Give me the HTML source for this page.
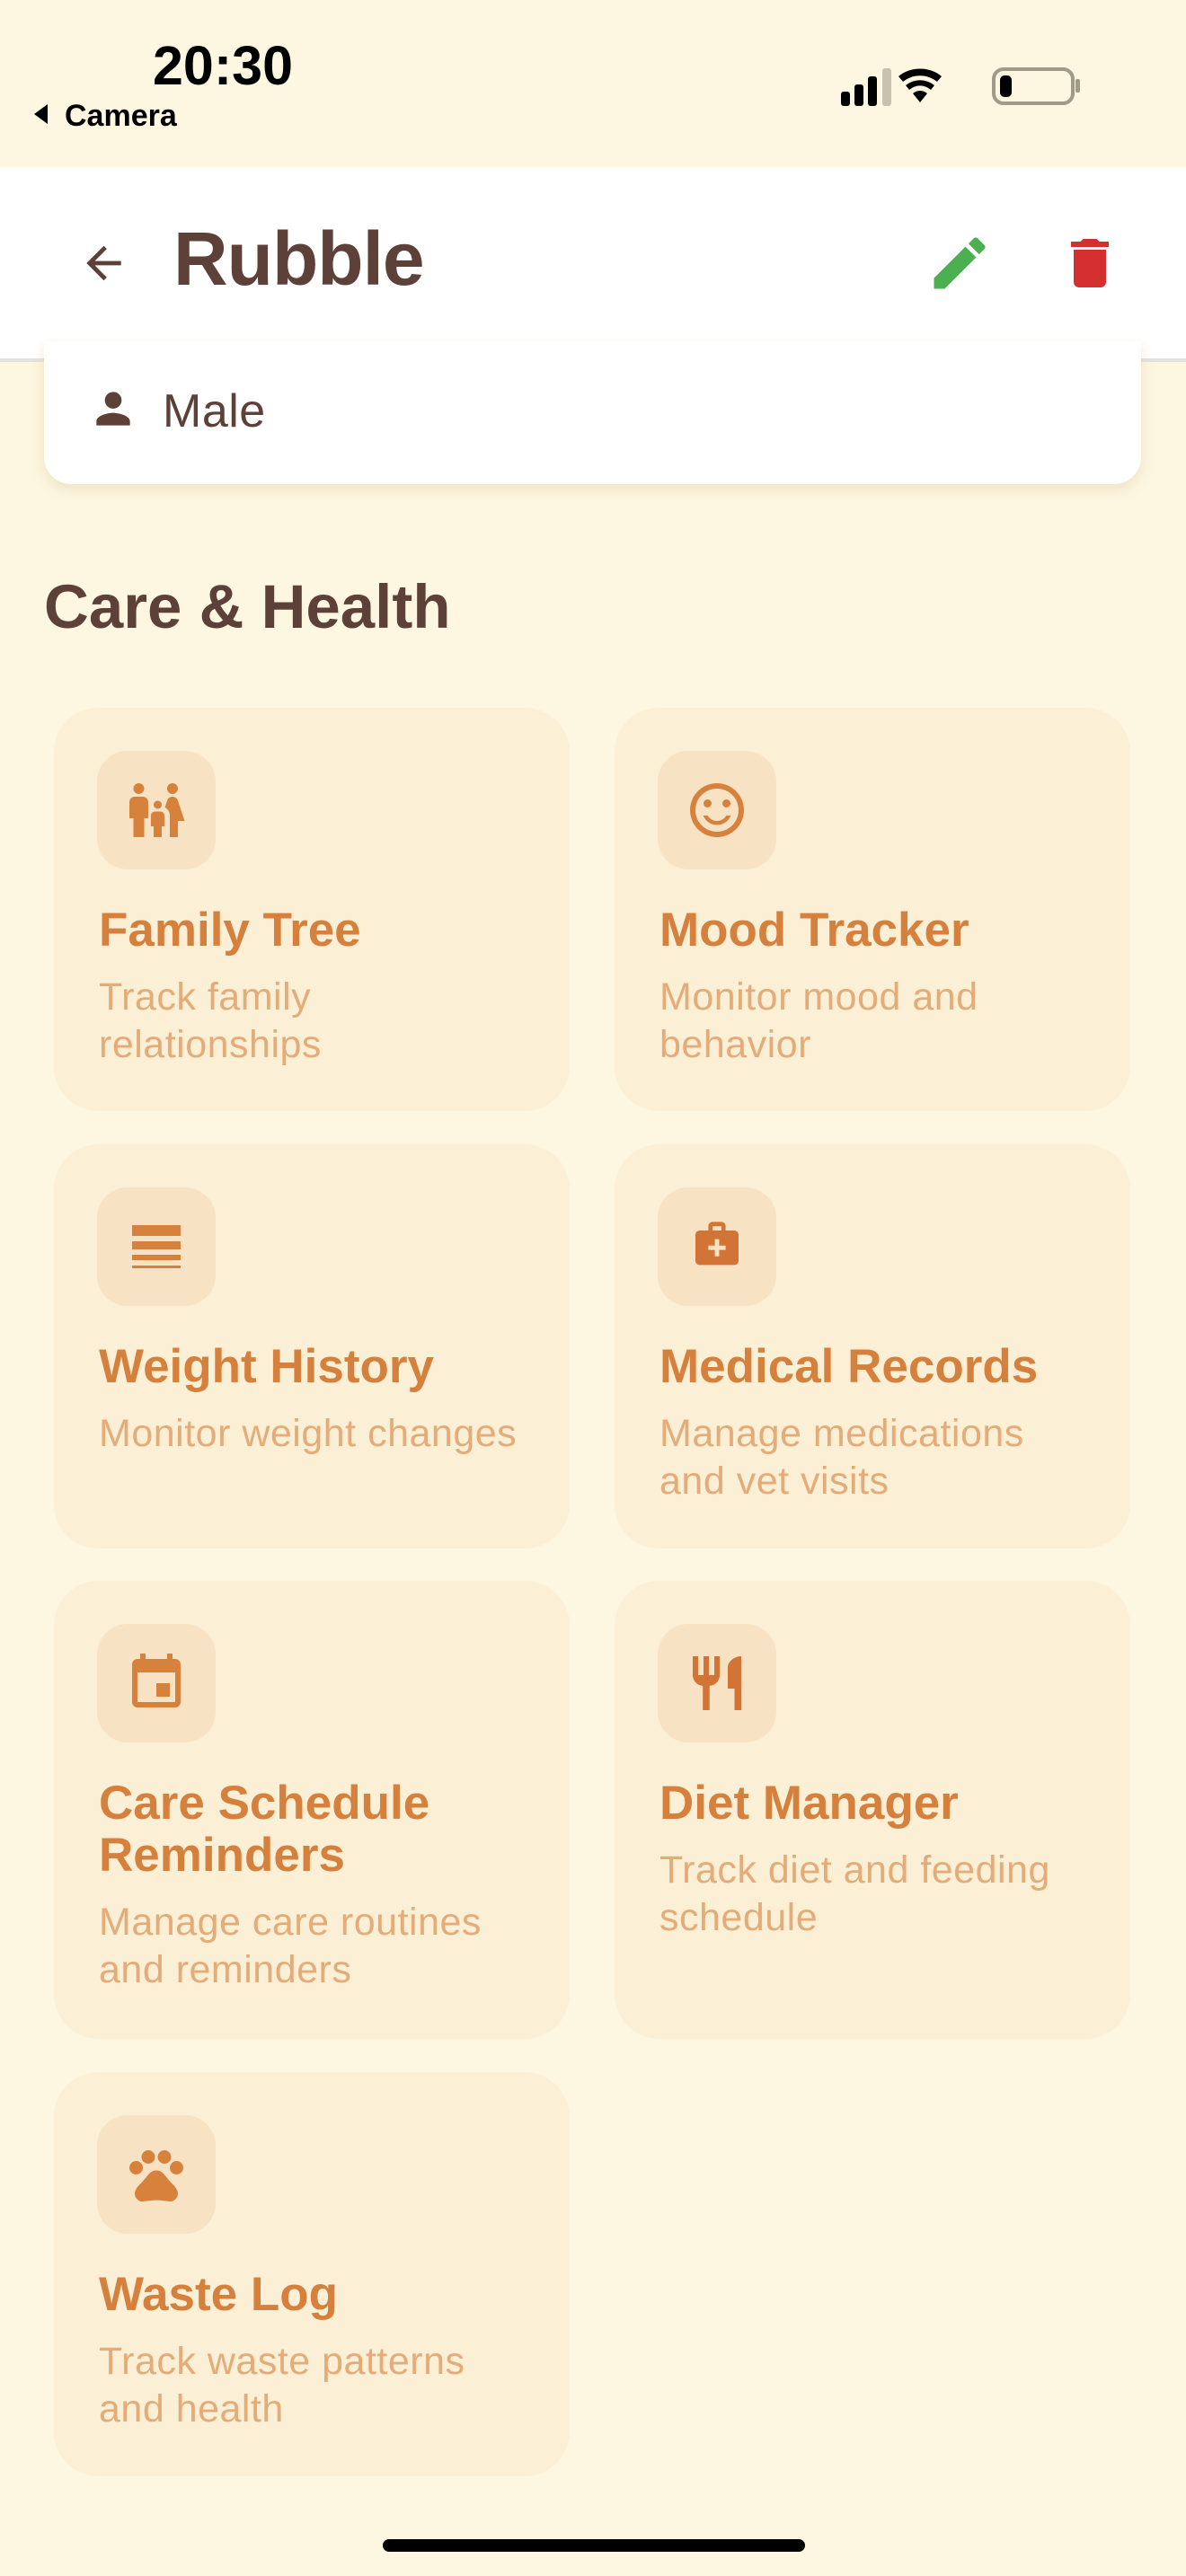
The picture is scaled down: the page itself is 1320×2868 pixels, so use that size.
<!DOCTYPE html>
<html><head><meta charset="utf-8"><style>
*{margin:0;padding:0;box-sizing:border-box}
body{width:1320px;height:2868px;background:#fdf6e0;font-family:"Liberation Sans",sans-serif;position:relative;overflow:hidden}
.abs{position:absolute}
.hdr{left:0;top:186px;width:1320px;height:217px;background:#fff;border-bottom:4px solid #e4e2dd}
.male{left:49px;top:380px;width:1221px;height:159px;background:#fff;border-radius:0 0 30px 30px;box-shadow:0 6px 14px rgba(200,170,120,.25)}
.card{position:absolute;width:574px;background:#fbefd6;border-radius:50px}
.ib{position:absolute;left:48px;top:48px;width:132px;height:132px;background:#f8e2c4;border-radius:34px;display:flex;align-items:center;justify-content:center}
.ib svg{width:72px;height:72px;fill:#d6823d}
.t{position:absolute;left:50px;top:219px;right:20px;color:#d5803c;font-weight:bold;font-size:53px;line-height:58px}
.d{position:absolute;left:50px;width:486px;color:#e4ac78;font-size:43px;line-height:53px;letter-spacing:.5px}
</style></head><body>
<div class="abs" style="left:170px;top:38px;font-size:61px;font-weight:bold;color:#000">20:30</div>
<div class="abs" style="left:38px;top:116px;width:0;height:0;border-top:11px solid transparent;border-bottom:11px solid transparent;border-right:15px solid #000"></div>
<div class="abs" style="left:72px;top:110px;font-size:34px;font-weight:bold;color:#000">Camera</div>
<svg class="abs" style="left:934px;top:74px" width="270" height="46">
<rect x="2" y="28" width="10" height="16" rx="3"/><rect x="17" y="20" width="10" height="24" rx="3"/><rect x="32" y="11" width="10" height="33" rx="3"/><rect x="48" y="2" width="10" height="42" rx="3" fill="#c9c2b0"/>
<path d="M90 40 L82 30 A12 12 0 0 1 98 30 Z"/><path d="M78 26 A18 18 0 0 1 102 26 L106 21 A25 25 0 0 0 74 21 Z"/><path d="M71 17 A30 30 0 0 1 109 17 L114 11 A38 38 0 0 0 66 11 Z"/>
<rect x="172" y="3" width="88" height="38" rx="11" fill="none" stroke="#a09a8a" stroke-width="4"/><rect x="179" y="10" width="13" height="24" rx="5"/><rect x="263" y="14" width="5" height="15" rx="2" fill="#a09a8a"/>
</svg>
<div class="abs hdr"></div>
<svg class="abs" style="left:72px;top:257px" width="72" height="72" viewBox="0 0 24 24" fill="#5d4037"><path d="M20 11H7.83l5.59-5.59L12 4l-8 8 8 8 1.41-1.41L7.83 13H20v-2z" transform="translate(2.5 0) scale(.8) translate(3 3)"/></svg>
<div class="abs" style="left:193px;top:240px;font-size:84px;font-weight:bold;color:#5d4037;letter-spacing:-1px">Rubble</div>
<svg class="abs" style="left:1030px;top:255px" width="76" height="76" viewBox="0 0 24 24" fill="#4caf50"><path d="M3 17.25V21h3.75L17.81 9.94l-3.75-3.75L3 17.25zM20.71 7.04c.39-.39.39-1.02 0-1.41l-2.34-2.34c-.39-.39-1.02-.39-1.41 0l-1.83 1.83 3.75 3.75 1.83-1.83z"/></svg>
<svg class="abs" style="left:1177px;top:257px" width="72" height="72" viewBox="0 0 24 24" fill="#d32f2f"><path d="M6 19c0 1.1.9 2 2 2h8c1.1 0 2-.9 2-2V7H6v12zM19 4h-3.5l-1-1h-5l-1 1H5v2h14V4z"/></svg>
<div class="abs male"></div>
<svg class="abs" style="left:98px;top:427px" width="56" height="56" viewBox="0 0 24 24" fill="#5d4037"><path d="M12 12c2.21 0 4-1.79 4-4s-1.79-4-4-4-4 1.79-4 4 1.79 4 4 4zm0 2c-2.67 0-8 1.34-8 4v2h16v-2c0-2.66-5.33-4-8-4z"/></svg>
<div class="abs" style="left:181px;top:428px;font-size:52px;color:#5d4037;letter-spacing:.5px">Male</div>
<div class="abs" style="left:49px;top:636px;font-size:69px;font-weight:bold;color:#5d4037">Care &amp; Health</div>

<div class="card" style="left:60px;top:788px;height:449px"><div class="ib"><svg viewBox="0 0 24 24"><path d="M16 4c0-1.11.89-2 2-2s2 .89 2 2-.89 2-2 2-2-.89-2-2zm4 18v-6h2.5l-2.54-7.63C19.68 7.55 18.92 7 18.06 7h-.12c-.86 0-1.63.55-1.9 1.37l-.86 2.58c1.08.6 1.82 1.73 1.82 3.05v8h3zm-7.5-10.5c.83 0 1.5-.67 1.5-1.5s-.67-1.5-1.5-1.5S11 9.17 11 10s.67 1.5 1.5 1.5zM5.5 6c1.11 0 2-.89 2-2s-.89-2-2-2-2 .89-2 2 .89 2 2 2zm2 16v-7H9V9c0-1.1-.9-2-2-2H4c-1.1 0-2 .9-2 2v6h1.5v7h4zM14 22v-4h1v-4c0-.82-.68-1.5-1.5-1.5h-2c-.82 0-1.5.68-1.5 1.5v4h1v4h3z"/></svg></div><div class="t">Family Tree</div><div class="d" style="top:296px">Track family<br>relationships</div></div>

<div class="card" style="left:684px;top:788px;height:449px"><div class="ib"><svg viewBox="0 0 24 24"><path d="M11.99 2C6.470 2 2 6.48 2 12s4.47 10 9.99 10C17.52 22 22 17.52 22 12S17.52 2 11.99 2zM12 20c-4.42 0-8-3.58-8-8s3.58-8 8-8 8 3.58 8 8-3.58 8-8 8z"/><circle cx="15.5" cy="9.5" r="1.5"/><circle cx="8.5" cy="9.5" r="1.5"/><path d="M12 16c-1.48 0-2.75-.81-3.45-2H6.88c.8 2.05 2.79 3.5 5.12 3.5s4.32-1.45 5.12-3.5h-1.67c-.7 1.19-1.97 2-3.45 2z"/></svg></div><div class="t">Mood Tracker</div><div class="d" style="top:296px">Monitor mood and<br>behavior</div></div>

<div class="card" style="left:60px;top:1274px;height:450px"><div class="ib"><svg viewBox="0 0 24 24"><path d="M3 17h18v-2H3v2zm0 3h18v-1H3v1zm0-7h18v-3H3v3zm0-9v4h18V4H3z"/></svg></div><div class="t">Weight History</div><div class="d" style="top:296px">Monitor weight changes</div></div>

<div class="card" style="left:684px;top:1274px;height:450px"><div class="ib"><svg viewBox="0 0 24 24" style="fill:#d27436"><path d="M20 6h-4V4c0-1.1-.9-2-2-2h-4c-1.1 0-2 .9-2 2v2H4c-1.1 0-2 .9-2 2v12c0 1.1.9 2 2 2h16c1.1 0 2-.9 2-2V8c0-1.1-.9-2-2-2zM10 4h4v2h-4V4zm6 11h-3v3h-2v-3H8v-2h3v-3h2v3h3v2z" transform="translate(2.4 1.2) scale(.8)"/></svg></div><div class="t">Medical Records</div><div class="d" style="top:296px">Manage medications<br>and vet visits</div></div>

<div class="card" style="left:60px;top:1760px;height:510px"><div class="ib"><svg viewBox="0 0 24 24"><path d="M17 12h-5v5h5v-5zM16 1v2H8V1H6v2H5c-1.11 0-1.99.9-1.99 2L3 19c0 1.1.89 2 2 2h14c1.1 0 2-.9 2-2V5c0-1.1-.9-2-2-2h-1V1h-2zm3 18H5V8h14v11z"/></svg></div><div class="t">Care Schedule Reminders</div><div class="d" style="top:354px">Manage care routines<br>and reminders</div></div>

<div class="card" style="left:684px;top:1760px;height:510px"><div class="ib"><svg viewBox="0 0 24 24" style="fill:#d27436"><path d="M11 9H9V2H7v7H5V2H3v7c0 2.12 1.66 3.84 3.75 3.97V22h2.5v-9.03C11.34 12.84 13 11.12 13 9V2h-2v7zm5-3v8h2.5v8H21V2c-2.76 0-5 2.24-5 4z"/></svg></div><div class="t">Diet Manager</div><div class="d" style="top:296px">Track diet and feeding<br>schedule</div></div>

<div class="card" style="left:60px;top:2307px;height:450px"><div class="ib"><svg viewBox="0 0 24 24"><circle cx="4.5" cy="9.5" r="2.5"/><circle cx="9" cy="5.5" r="2.5"/><circle cx="15" cy="5.5" r="2.5"/><circle cx="19.5" cy="9.5" r="2.5"/><path d="M17.34 14.86c-.87-1.02-1.6-1.89-2.48-2.91-.46-.54-1.05-1.08-1.75-1.32-.11-.04-.22-.07-.33-.09-.25-.04-.52-.04-.78-.04s-.53 0-.79.05c-.11.02-.22.05-.33.09-.7.24-1.28.78-1.75 1.32-.87 1.02-1.6 1.89-2.48 2.91-1.31 1.31-2.92 2.76-2.62 4.79.29 1.02 1.02 2.03 2.33 2.32.73.15 3.06-.44 5.54-.44h.18c2.48 0 4.81.58 5.54.44 1.31-.29 2.04-1.31 2.33-2.32.31-2.04-1.3-3.49-2.61-4.8z"/></svg></div><div class="t">Waste Log</div><div class="d" style="top:296px">Track waste patterns<br>and health</div></div>

<div class="abs" style="left:426px;top:2827px;width:470px;height:14px;border-radius:7px;background:#000"></div>
</body></html>
